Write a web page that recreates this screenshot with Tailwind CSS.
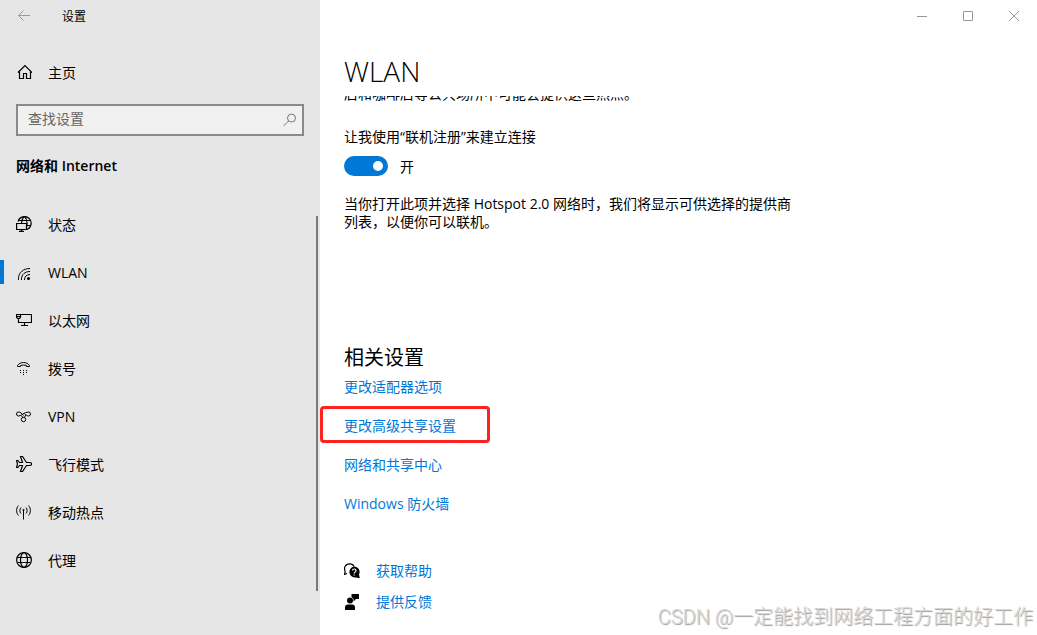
<!DOCTYPE html>
<html lang="zh-CN">
<head>
    <meta charset="UTF-8">
    <meta name="viewport" content="width=device-width, initial-scale=1.0">
    <title>设置</title>
    <script src="https://cdn.jsdelivr.net/npm/@tailwindcss/browser@4"></script>
</head>
<body class="bg-white text-black text-sm font-['Open_Sans','Noto_Sans_CJK_SC',sans-serif]">
    <div class="flex h-screen overflow-hidden">
        <!-- Sidebar -->
        <aside class="relative w-80 shrink-0 bg-[#e6e6e6]">
            <header class="flex h-8 items-center gap-[30px] pl-4 text-xs">
                <button aria-label="返回" class="text-[#999]">
                    <svg class="size-4" viewBox="0 0 16 16" fill="none" stroke="currentColor"><path d="M14 7.5H2.5M7.5 2.5L2.5 7.5L7.5 12.5"/></svg>
                </button>
                <span class="pt-0.5">设置</span>
            </header>

            <a href="#" class="mt-4 flex h-12 items-center gap-4 px-4">
                <svg class="size-4" viewBox="0 0 16 16" fill="none" stroke="currentColor" stroke-width="1.2"><path d="M2 8.5L9 1.5L16 8.5M3.5 7V14.5H7.5V9.500H10.5V14.5H14.5V7"/></svg>
                <span class="pt-0.5">主页</span>
            </a>

            <div class="mx-4 mt-2 flex h-8 items-center border-2 border-[#8a8a8a] bg-[#f0f0f0] pl-2 pr-1">
                <input type="text" aria-label="查找设置" placeholder="查找设置" class="min-w-0 flex-1 bg-transparent px-0.5 pb-0.5 outline-none placeholder:text-[#666]">
                <svg class="size-4 text-[#777]" viewBox="0 0 16 16" fill="none" stroke="currentColor"><circle cx="9.5" cy="6" r="4"/><path d="M6.5 9L1.5 14"/></svg>
            </div>

            <h2 class="mt-5 px-4 leading-5 font-semibold">网络和 Internet</h2>

            <nav class="mt-6">
                <a href="#" class="flex h-12 items-center gap-4 px-4">
                    <svg class="size-4" viewBox="0 0 16 16" fill="none" stroke="currentColor" stroke-width="1.2"><path d="M2 5.5A6.7 6.7 0 1 1 11 13.5M8.2 .6C6.500 2 5.7 4 5.5 7M8.500 .6C11 3 11.5 7 10.5 11M3 4.500H14.2M10.5 9.5H14.5"/><path d="M.6 7.500H10.5V13.5H.6ZM5.5 13.5V15.5M3 15.400H8"/></svg>
                    <span class="pt-0.5">状态</span>
                </a>
                <a href="#" aria-current="page" class="relative flex h-12 items-center gap-4 px-4">
                    <span class="absolute left-0 top-3 h-6 w-1 bg-[#0078d7]"></span>
                    <svg class="size-4" viewBox="0 0 16 16" fill="none" stroke="currentColor"><path d="M2.5 16V14.5C2.5 8.5 7.5 4.5 14 4.5M5.5 16V15C5.5 10.5 9 7.5 14 7.5M8.5 16C8.5 12.5 10.5 10.5 14 10.5"/><circle cx="12.5" cy="14.5" r="1.5" fill="currentColor" stroke="none"/></svg>
                    <span class="pt-0.5">WLAN</span>
                </a>
                <a href="#" class="flex h-12 items-center gap-4 px-4">
                    <svg class="size-4" viewBox="0 0 16 16" fill="none" stroke="currentColor" stroke-width="1.2"><path d="M5 2.5H15.5V10.5H2.500V6.5M8.5 10.5V13.5M5 13.5H12M.6 2.5H4.500V5.5L2.5 7L.6 5.5ZM.6 4.500H4.500"/></svg>
                    <span class="pt-0.5">以太网</span>
                </a>
                <a href="#" class="flex h-12 items-center gap-4 px-4">
                    <svg class="size-4" viewBox="0 0 16 16" fill="none" stroke="currentColor"><path d="M1.5 6.5V5.5C3 3.500 5 2.5 7.5 2.5S12 3.5 13.5 5.5V6.5H10.5V5.500C8.5 5 6.5 5 4.5 5.5V6.5Z"/><path d="M4 10.5H5M7 10.5H8M10 10.5H11M4 12.5H5M7 12.5H8M10 12.5H11M7 14.5H8"/></svg>
                    <span class="pt-0.5">拨号</span>
                </a>
                <a href="#" class="flex h-12 items-center gap-4 px-4">
                    <svg class="size-4" viewBox="0 0 16 16" fill="none" stroke="currentColor"><path d="M7.500 7.500C6 6 4.500 3.800 2.5 4A2 2 0 0 0 2.500 8C5.500 8 8 4 12.5 4A2 2 0 0 1 12.500 8C11 8 9.500 6.500 8.500 5.800M5 7.500L7 9.500M10 7L8.500 9"/><circle cx="7.5" cy="11.5" r="2.200"/></svg>
                    <span class="pt-0.5">VPN</span>
                </a>
                <a href="#" class="flex h-12 items-center gap-4 px-4">
                    <svg class="size-4" viewBox="0 0 16 16" fill="none" stroke="currentColor" stroke-width="1.2"><path d="M.5 4.5H2L3.5 6.5H6.5L4.5 .5H6.5L10.5 6.5H14A1 1 0 0 1 14 9.5H10.5L6.5 15.5H4.5L6.5 9.5H3.5L2 11.5H.5L1.5 8Z"/></svg>
                    <span class="pt-0.5">飞行模式</span>
                </a>
                <a href="#" class="flex h-12 items-center gap-4 px-4">
                    <svg class="size-4" viewBox="0 0 16 16" fill="none" stroke="currentColor"><path d="M7.5 6V15.5M5 3.5C3.5 5 3.5 8 5 9.5M10 3.5C11.5 5 11.5 8 10 9.5M2.5 1.5C0 4 0 9 2.5 11.5M12.5 1.5C15 4 15 9 12.5 11.5"/><circle cx="7.5" cy="6" r="1" fill="currentColor" stroke="none"/></svg>
                    <span class="pt-0.5">移动热点</span>
                </a>
                <a href="#" class="flex h-12 items-center gap-4 px-4">
                    <svg class="size-4" viewBox="0 0 16 16" fill="none" stroke="currentColor" stroke-width="1.2"><circle cx="8" cy="8" r="7.4"/><ellipse cx="8" cy="8" rx="3.5" ry="7.4"/><path d="M1.5 5.5H14.5M1.5 10.5H14.5"/></svg>
                    <span class="pt-0.5">代理</span>
                </a>
            </nav>
            <!-- Scroll thumb -->
            <div class="absolute right-0.5 top-54 bottom-11 w-0.5 bg-[#7a7a7a]"></div>
        </aside>

        <!-- Content -->
        <main class="relative flex min-w-0 flex-1 flex-col">
            <div class="flex h-8 justify-end text-[#999]">
                <button aria-label="最小化" class="flex w-[46px] items-center justify-center">
                    <svg class="size-3" viewBox="0 0 12 12" stroke="currentColor"><path d="M1 6.5H11"/></svg>
                </button>
                <button aria-label="最大化" class="flex w-[46px] items-center justify-center">
                    <svg class="size-3" viewBox="0 0 12 12" fill="none" stroke="currentColor"><path d="M1.5 1.5H10.5V10.5H1.5Z"/></svg>
                </button>
                <button aria-label="关闭" class="flex w-[46px] items-center justify-center">
                    <svg class="size-3" viewBox="0 0 12 12" stroke="currentColor"><path d="M1 1L11 11M11 1L1 11"/></svg>
                </button>
            </div>

            <h1 class="mt-5 px-6 text-[28px] leading-[38px] font-light">WLAN</h1>

            <!-- Scrolled a little, so the first line is partly hidden -->
            <section class="mt-1.5 flex min-h-0 flex-1 flex-col overflow-hidden px-6">
                <p class="-mt-3 shrink-0 leading-5">店和咖啡店等公共场所中可能会提供这些热点。</p>

                <p class="mt-6 leading-[18px]" id="signup">让我使用“联机注册”来建立连接</p>
                <label class="mt-2.5 flex h-5 items-center gap-3">
                    <input type="checkbox" role="switch" aria-labelledby="signup" checked class="peer sr-only">
                    <span class="flex h-5 w-11 items-center justify-end rounded-full bg-[#0078d7] pr-[5px]">
                        <span class="size-2.5 rounded-full bg-white"></span>
                    </span>
                    <span class="pt-0.5">开</span>
                </label>
                <p class="mt-[19px] max-w-[450px] leading-[18px]">当你打开此项并选择 Hotspot 2.0 网络时，我们将显示可供选择的提供商列表，以便你可以联机。</p>

                <h2 class="mt-[113px] text-xl leading-7">相关设置</h2>
                <ul class="leading-5 text-[#0078d7]">
                    <li class="mt-[5px]"><a href="#">更改适配器选项</a></li>
                    <li class="relative mt-[19px]">
                        <span class="absolute -left-6 -top-2.5 h-[37px] w-[170px] rounded-sm border-3 border-[#ff2020]"></span>
                        <a href="#">更改高级共享设置</a>
                    </li>
                    <li class="mt-[19px]"><a href="#">网络和共享中心</a></li>
                    <li class="mt-[19px]"><a href="#">Windows 防火墙</a></li>
                </ul>

                <ul class="mt-[47px] leading-5 text-[#0078d7]">
                    <li class="flex items-center gap-4">
                        <svg class="size-4 text-black" viewBox="0 0 16 16" fill="none" stroke="currentColor"><path d="M3 10.5L.5 11.5L1.2 8.5C-.5 5 1.5 .8 5.5 .8C8 .8 9.5 2 10 3.5" stroke-width="1.2"/><path d="M10 3.5a5.5 5.5 0 0 1 5 8l.8 3.8l-3.8-.8a5.5 5.5 0 1 1-2-11Z" fill="currentColor" stroke="none"/><path d="M8.5 7.5C8.5 5.5 12 5.5 12 7.5C12 9 10.2 8.8 10.2 10.5M10.2 11.5V12.5" stroke="#fff" stroke-width="1.2"/></svg>
                        <a href="#">获取帮助</a>
                    </li>
                    <li class="mt-[11px] flex items-center gap-4">
                        <svg class="size-4 text-black" viewBox="0 0 16 16" fill="currentColor"><circle cx="6" cy="6.5" r="3"/><path d="M1 16V13.5A3 3 0 0 1 4 10.5H8A3 3 0 0 1 11 13.5V16ZM7.5 0H15V5H12L9.5 7.5V5L7.5 3Z"/></svg>
                        <a href="#">提供反馈</a>
                    </li>
                </ul>
            </section>

            <p class="absolute right-1 bottom-1 text-xl leading-7 font-light whitespace-nowrap text-[#d8d8d8] font-[Roboto,'Noto_Sans_CJK_SC',sans-serif] text-shadow-[1px_1px_1px_#999]">CSDN @一定能找到网络工程方面的好工作</p>
        </main>
    </div>
</body>
</html>
